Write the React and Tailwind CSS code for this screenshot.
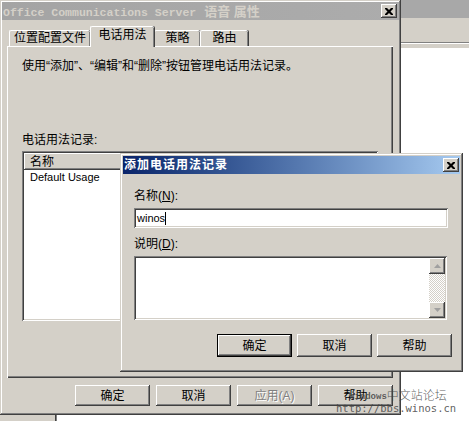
import React from 'react';

const UI = "font-['Liberation_Sans','Noto_Sans_CJK_SC',sans-serif]";
const RAISED = "shadow-[inset_-1px_-1px_#404040,inset_1px_1px_#ffffff,inset_-2px_-2px_#808080]";
const SUNKEN = "shadow-[inset_1px_1px_#808080,inset_-1px_-1px_#ffffff,inset_2px_2px_#404040,inset_-2px_-2px_#d4d0c8]";
const FRAME = "shadow-[inset_-1px_-1px_#404040,inset_1px_1px_#d4d0c8,inset_-2px_-2px_#808080,inset_2px_2px_#ffffff]";

const CloseGlyph = () => (
  <svg width="8" height="7" viewBox="0 0 8 7" className="block">
    <path d="M0 0h2l2 2 2-2h2v1L5.5 3.5 8 6v1H6L4 5 2 7H0V6l2.5-2.5L0 1z" fill="#000" />
  </svg>
);

const CloseBtn = () => (
  <div className={`w-[16px] h-[14px] bg-[#d4d0c8] flex items-center justify-center ${RAISED}`}>
    <CloseGlyph />
  </div>
);

const Btn = ({ children, def, disabled, h = 'h-[21px]' }) => (
  <div
    className={`w-[75px] ${h} bg-[#d4d0c8] flex items-center justify-center text-[12px] leading-none ${
      def ? 'border border-black shadow-[inset_-1px_-1px_#404040,inset_1px_1px_#ffffff,inset_-2px_-2px_#808080]' : RAISED
    } ${disabled ? 'text-[#808080] [text-shadow:1px_1px_#ffffff]' : 'text-black'}`}
  >
    {children}
  </div>
);

const Tab = ({ label, w, active }) => (
  <div
    className={`${w} ${
      active ? 'h-[21px] relative z-10 -mb-px pb-[5px]' : 'h-[16px] pb-px'
    } bg-[#d4d0c8] rounded-t-[2px] border-t border-l border-white shadow-[inset_-1px_0_#808080,1px_0_#404040] flex items-end justify-center text-[12px] leading-[13px]`}
  >
    {label}
  </div>
);

const Arrow = ({ up }) => (
  <div className={`w-[16px] h-[16px] bg-[#d4d0c8] flex items-center justify-center ${RAISED}`}>
    <svg width="7" height="4" viewBox="0 0 7 4" className="block">
      {up ? (
        <path d="M3.5 0L7 4H0z" fill="#a0a0a0" />
      ) : (
        <path d="M0 0h7L3.5 4z" fill="#a0a0a0" />
      )}
    </svg>
  </div>
);

const AddUsageDialog = () => (
  <div className={`absolute left-[120px] top-[153px] w-[343px] h-[219px] bg-[#d4d0c8] p-[3px] flex flex-col ${FRAME}`}>
    <div className="h-[18px] bg-gradient-to-r from-[#0a246a] to-[#a6caf0] flex items-center justify-between pl-[1px] pr-[1px]">
      <span className="text-white font-bold text-[12px] tracking-[1px] leading-none">添加电话用法记录</span>
      <CloseBtn />
    </div>
    <div className="px-[11px] pt-[15px] flex flex-col">
      <div className="text-[12px] leading-[14px]">
        名称(<span className="underline">N</span>):
      </div>
      <div className={`mt-[5px] w-[314px] h-[20px] bg-white flex items-center pl-[3px] ${SUNKEN}`}>
        <span className="text-[11px] leading-none font-['Liberation_Sans',sans-serif]">winos</span>
        <span className="w-px h-[13px] bg-black" />
      </div>
      <div className="mt-[9px] text-[12px] leading-[14px]">
        说明(<span className="underline">D</span>):
      </div>
      <div className={`mt-[5px] w-[313px] h-[64px] bg-white p-[2px] flex justify-end ${SUNKEN}`}>
        <div className="w-[16px] flex flex-col bg-[repeating-conic-gradient(#d4d0c8_0%_25%,#ffffff_0%_50%)] bg-[length:2px_2px]">
          <Arrow up />
          <div className="flex-1" />
          <Arrow />
        </div>
      </div>
      <div className="mt-[14px] -mr-[3px] flex justify-end gap-[5px]">
        <Btn def h="h-[23px]">确定</Btn>
        <Btn h="h-[23px]">取消</Btn>
        <Btn h="h-[23px]">帮助</Btn>
      </div>
    </div>
  </div>
);

const PropertiesDialog = () => (
  <div className={`w-[401px] h-[415px] shrink-0 bg-[#d4d0c8] p-[2px] flex flex-col ${FRAME}`}>
    <div className="h-[18px] bg-gradient-to-r from-[#a4a4a4] to-[#acacac] flex items-center justify-between pl-[1px] pr-[2px]">
      <span className="text-[#d4d0c8] font-bold leading-none whitespace-nowrap">
        <span className="font-['Liberation_Mono',monospace] text-[11.5px]">Office Communications Server</span>
        <span className="text-[13px] ml-[8px]">语音 属性</span>
      </span>
      <CloseBtn />
    </div>
    <div className="mt-[6px] flex items-end pl-[7px]">
      <Tab label="位置配置文件" w="w-[81px]" />
      <Tab label="电话用法" w="w-[64px]" active />
      <Tab label="策略" w="w-[46px]" />
      <Tab label="路由" w="w-[48px]" />
    </div>
    <div className="ml-[5px] w-[386px] h-[332px] border-t border-l border-white shadow-[inset_-1px_-1px_#404040,inset_-2px_-2px_#808080] px-[14px] pt-[12px] flex flex-col">
      <div className="text-[12px] leading-[14px]">使用“添加”、“编辑”和“删除”按钮管理电话用法记录。</div>
      <div className="mt-[60px] text-[12px] leading-[14px]">电话用法记录:</div>
      <div className={`mt-[4px] w-[356px] h-[170px] bg-white p-[2px] flex flex-col ${SUNKEN}`}>
        <div className={`h-[17px] bg-[#d4d0c8] flex items-center pl-[6px] text-[12px] leading-none ${RAISED}`}>
          名称
        </div>
        <div className="h-[15px] flex items-center pl-[6px] text-[11px] leading-none font-['Liberation_Sans',sans-serif]">
          Default Usage
        </div>
      </div>
    </div>
    <div className="mt-[7px] flex justify-end gap-[6px] pr-[6px]">
      <Btn>确定</Btn>
      <Btn>取消</Btn>
      <Btn disabled>应用(A)</Btn>
      <Btn>帮助</Btn>
    </div>
  </div>
);

const BehindWindow = () => (
  <div className="flex-1 flex flex-col">
    <div className="h-[18px] bg-[#a8a8a8]" />
    <div className="h-px bg-[#d4d0c8]" />
    <div className="h-[23px] bg-[#d4d0c8]" />
    <div className="h-px bg-[#808080]" />
    <div className="h-px bg-white" />
    <div className="h-[4px] bg-[#d4d0c8]" />
    <div className="flex-1 bg-white" />
  </div>
);

export default function App() {
  return (
    <div className={`relative w-[469px] h-[421px] overflow-hidden bg-white text-black ${UI}`}>
      <div className="flex h-[415px]">
        <PropertiesDialog />
        <BehindWindow />
      </div>
      <div className="flex h-[6px]">
        <div className="w-[55px] bg-[#d4d0c8]" />
        <div className="w-px bg-[#404040]" />
        <div className="w-px bg-[#808080]" />
        <div className="flex-1 bg-white" />
      </div>
      <AddUsageDialog />
      <div className="absolute left-[349px] top-[390px] flex flex-col text-[#444444]/85 pointer-events-none">
        <div className="flex items-end leading-none">
          <span className="font-['Liberation_Mono',monospace] text-[9px] font-bold">Windows</span>
          <span className="text-[12px] font-light">中文站论坛</span>
        </div>
        <span className="-ml-[13px] mt-[1px] font-['DejaVu_Sans_Mono',monospace] text-[10.5px] leading-none font-light">
          http://bbs.winos.cn
        </span>
      </div>
    </div>
  );
}
